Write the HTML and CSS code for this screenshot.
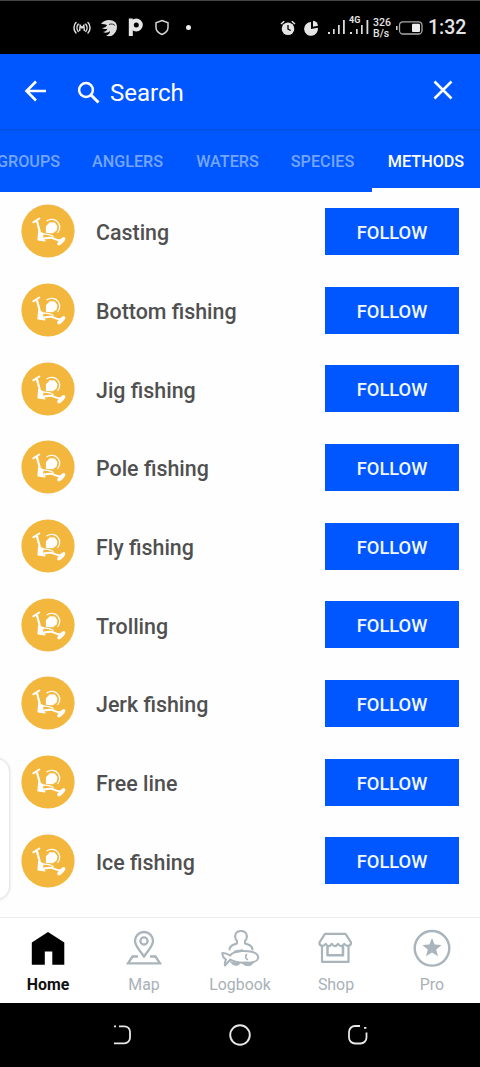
FILE: index.html
```html
<!DOCTYPE html>
<html lang="en">
<head>
<meta charset="utf-8">
<title>Search methods</title>
<link rel="stylesheet" href="styles.css">
</head>
<body>
<svg class="defs" width="0" height="0" aria-hidden="true">
  <symbol id="reel" viewBox="0 0 54 54">
    <circle cx="27" cy="27" r="26.6" fill="#f4b73e"/>
    <g fill="none" stroke="#fff" stroke-linecap="round" stroke-linejoin="round">
      <path d="M12.300 18.300l6-3.800" stroke-width="2"/>
      <path d="M16 17.500l2.600 9.500" stroke-width="2.200"/>
      <path d="M17.800 27.500l4 2.500-.5 4 2.500 2.800-6.600-1z" fill="#fff" stroke-width="1.500"/>
      <path d="M26 16.800c3.500-2.500 8.500-1.800 11 1.500 2.300 3.200 2.200 7-.2 10.200" stroke-width="1.200"/>
      <path d="M23.300 34.200c2.500.3 4-.6 6.500-.4 3 .2 4.500 2 8.800 2.400" stroke-width="2"/>
      <path d="M22.500 30c3 .2 6.500 0 9.500 2.300" stroke-width="1.300"/>
    </g>
    <path d="M25.500 22.500l3.500-3.700 4.500.2 2.300 3.300-.8 4-3.200 2.300-6.300-.3z" fill="#fff" stroke="#fff" stroke-linejoin="round" stroke-width="1.200"/>
    <ellipse cx="40.300" cy="37.300" rx="5.200" ry="2.200" transform="rotate(-46 40.300 37.300)" fill="#fff"/>
  </symbol>
</svg>
<div class="screen">
  <header class="status">
    <div class="status-left">
      <svg width="18" height="14" viewBox="0 0 18 14" fill="none" stroke="#ddd" stroke-width="1.500" stroke-linecap="round"><path d="M3 1.500C.3 4 .3 9.500 3 12M5.200 3.200c-1.600 2-1.600 5.200 0 7.200M15 1.500c2.700 2.500 2.700 8 0 10.500M12.800 3.200c1.600 2 1.600 5.200 0 7.200M6.700 9.500l.5-5L9 7l1.800-2.500.5 5"/></svg>
      <svg width="18" height="18" viewBox="0 0 18 18"><path d="M1 5C4 .5 11-.5 15 3c3.500 3.500 2 10-2 13-2 1.500-5 1.500-7 .5 3-1 4-2.500 4-4.500-2 2-5 2-7 1 3-.5 4-2 4.500-3.500C6 10.500 3.500 10 2 9c3 0 4.500-1.500 5-3-2-1-4-.5-6-1z" fill="#ddd"/><path d="M9 5.500c2.500-1 4.500-.5 6 1" fill="none" stroke="#000" stroke-width=".8"/></svg>
      <svg width="16" height="19" viewBox="0 0 16 19"><path d="M2.800 18V.5" stroke="#e6e6e6" stroke-width="4"/><circle cx="8.300" cy="7" r="4.500" fill="none" stroke="#e6e6e6" stroke-width="4"/></svg>
      <svg width="16" height="17" viewBox="0 0 16 17"><path d="M8 1.500l6 2.200v4.800c0 3-2.300 5.500-6 7-3.700-1.500-6-4-6-7V3.700z" fill="none" stroke="#d5d5d5" stroke-width="1.500"/></svg>
      <span class="status-dot"></span>
    </div>
    <div class="status-right">
      <svg class="alarm" width="16" height="16" viewBox="0 0 16 16"><circle cx="8" cy="8.800" r="6.300" fill="#e5e5e5"/><path d="M1 4l3.200-2.800M15 4l-3.200-2.800" stroke="#e5e5e5" stroke-width="1.500"/><path d="M8 5v4.200l2.700 1.300" fill="none" stroke="#000" stroke-width="1.300"/></svg>
      <svg class="pie" width="15" height="16" viewBox="0 0 15 16"><path d="M7 2v7l6.800-1.300A6.900 6.900 0 1 1 7 2z" fill="#e5e5e5"/><path d="M9 .8a6 6 0 0 1 5 5L9 6.800z" fill="#e5e5e5"/></svg>
      <svg class="bars" width="18" height="15" viewBox="0 0 18 15" fill="#ddd"><path d="M0 12h2v2H0zM5 9h1.700v5H5zM10 5h1.700v9H10zM15 0h1.800v14H15z"/></svg>
      <div class="mobile">
        <svg width="19" height="15" viewBox="0 0 19 15" fill="#ddd"><path d="M0 12h2v2H0zM6 9h1.700v5H6zM11 5h1.700v9H11zM16.500 0h1.800v14h-1.800z"/></svg>
        <span class="net">4G</span>
      </div>
      <div class="speed"><span>326</span><span>B/s</span></div>
      <svg class="battery" width="27" height="14" viewBox="0 0 27 14"><rect x="3.500" y=".8" width="22.500" height="12.200" rx="3.500" fill="none" stroke="#aaa" stroke-width="1.300"/><path d="M.8 5v4" stroke="#ddd" stroke-width="1.500"/><rect x="16" y="2.800" width="8" height="8.200" rx="1" fill="#eee"/></svg>
      <span class="clock">1:32</span>
    </div>
  </header>

  <div class="search-bar">
    <svg class="back" width="24" height="22" viewBox="0 0 24 22" fill="none" stroke="#fff" stroke-width="2.600"><path d="M22 11H3M12 1.500L2.500 11l9.500 9.500"/></svg>
    <svg class="glass" width="24" height="24" viewBox="0 0 24 24" fill="none" stroke="#fff"><circle cx="9" cy="9" r="6.900" stroke-width="2.500"/><path d="M14 14l7.500 7.500" stroke-width="3"/></svg>
    <span class="search-text">Search</span>
    <svg class="close" width="20" height="20" viewBox="0 0 20 20" stroke="#fff" stroke-width="2.500"><path d="M1.500 1.500l17 17M18.500 1.500l-17 17"/></svg>
  </div>

  <nav class="tabs">
    <span class="tab">GROUPS</span>
    <span class="tab">ANGLERS</span>
    <span class="tab">WATERS</span>
    <span class="tab">SPECIES</span>
    <span class="tab active">METHODS</span>
  </nav>

  <main class="list">
    <div class="row"><svg class="reel"><use href="#reel"/></svg><span class="name">Casting</span><button class="follow">FOLLOW</button></div>
    <div class="row"><svg class="reel"><use href="#reel"/></svg><span class="name">Bottom fishing</span><button class="follow">FOLLOW</button></div>
    <div class="row"><svg class="reel"><use href="#reel"/></svg><span class="name">Jig fishing</span><button class="follow">FOLLOW</button></div>
    <div class="row"><svg class="reel"><use href="#reel"/></svg><span class="name">Pole fishing</span><button class="follow">FOLLOW</button></div>
    <div class="row"><svg class="reel"><use href="#reel"/></svg><span class="name">Fly fishing</span><button class="follow">FOLLOW</button></div>
    <div class="row"><svg class="reel"><use href="#reel"/></svg><span class="name">Trolling</span><button class="follow">FOLLOW</button></div>
    <div class="row"><svg class="reel"><use href="#reel"/></svg><span class="name">Jerk fishing</span><button class="follow">FOLLOW</button></div>
    <div class="row"><svg class="reel"><use href="#reel"/></svg><span class="name">Free line</span><button class="follow">FOLLOW</button></div>
    <div class="row"><svg class="reel"><use href="#reel"/></svg><span class="name">Ice fishing</span><button class="follow">FOLLOW</button></div>
    <div class="edge-handle"></div>
  </main>

  <nav class="bottom">
    <div class="item current">
      <svg width="40" height="40" viewBox="0 0 40 40"><path d="M20 4l16.300 10.500v22.300H24.300V23.500h-7.500v13.300H3.800V14.500z" fill="#000"/></svg>
      <span>Home</span>
    </div>
    <div class="item">
      <svg width="40" height="40" viewBox="0 0 40 40" fill="none" stroke="#a9b4bb" stroke-width="2.300"><path d="M20 28.500c-4-6-9-10.500-9-15.500a9 9 0 0 1 18 0c0 5-5 9.500-9 15.500z"/><circle cx="20" cy="13" r="3.600"/><path d="M14 28.500H8.500L4 35.300h32L31.500 28.500H26"/></svg>
      <span>Map</span>
    </div>
    <div class="item">
      <svg width="40" height="40" viewBox="0 0 40 40" fill="none" stroke="#a9b4bb" stroke-width="2" stroke-linecap="round" stroke-linejoin="round"><path d="M9.500 21.500c.5-4 3.500-5 7.500-6v-2.500C13.500 9 15 3 21 3s7.500 6 4 10v2.500c4 1 7 2 7.500 6"/><path d="M10 27.500c3-3.500 9-4.500 13-4.500 8 0 15 2 15.300 6.500-.5 4-6 5.500-12 5-6 .5-11.500-.5-16-3L5 37.500c-.5-2 0-4 1-6C3.500 30 2.300 27.500 2.300 25c3 0 5.200.5 7.700 2.500z"/><path d="M26.500 26.500c-1.200 2-.8 4 .8 5" stroke-width="1.600"/><path d="M10.500 33.800c3 1 6 1.500 9.500 1.200-1.500 3.500-7.500 3-9.500-1.200zM22.500 35.300c4 .3 8-.3 11.500-1.800-1.500 5-8.500 5.500-11.500 1.800z" fill="#a9b4bb" stroke-width="1"/><path d="M15 23.800l7-1.200" stroke-width="2.500"/></svg>
      <span>Logbook</span>
    </div>
    <div class="item">
      <svg width="40" height="40" viewBox="0 0 40 40" fill="none" stroke="#a9b4bb" stroke-width="2.200" stroke-linejoin="round"><path d="M9 5.800h20.500l5.500 8.500c.3 3.500-4 5-6.700 1.500-2 3-4.500 3-6.300 0-2 3-4.500 3-6.300 0-2 3-4.500 3-6 0-2.500 3.500-6.700 2-6.200-1.500z"/><path d="M6 18v15.800h26.500V18"/><path d="M11.500 18v9.200h15.500V18" stroke-width="2.500"/></svg>
      <span>Shop</span>
    </div>
    <div class="item">
      <svg width="40" height="40" viewBox="0 0 40 40"><circle cx="20" cy="20.300" r="17.300" fill="none" stroke="#a9b4bb" stroke-width="2.400"/><path d="M20 10l2.600 6.500 7.100.4-5.500 4.500 1.800 6.900-6-3.900-6 3.900 1.800-6.900-5.500-4.500 7.100-.4z" fill="#a9b4bb"/></svg>
      <span>Pro</span>
    </div>
  </nav>

  <footer class="system">
    <svg width="20" height="22" viewBox="0 0 20 22" fill="none" stroke="#e8e8e8" stroke-width="1.800"><path d="M6 2.300h5.500a5.500 5.500 0 0 1 5.500 5.500v6a5.500 5.500 0 0 1-5.500 5.500H1M1 2.300h2"/></svg>
    <svg width="24" height="24" viewBox="0 0 24 24" fill="none" stroke="#e8e8e8" stroke-width="1.900"><circle cx="12" cy="12" r="9.800"/></svg>
    <svg width="22" height="22" viewBox="0 0 22 22" fill="none" stroke="#e8e8e8" stroke-width="1.800"><path d="M13 2H8a6 6 0 0 0-6 6v5.500a6 6 0 0 0 6 6h5.500a6 6 0 0 0 6-6V8.500M17 3.900h2.400"/></svg>
  </footer>
</div>
</body>
</html>
```
FILE: styles.css
```css
* { box-sizing: border-box; }
body { margin: 0; background: #fff; font-family: Roboto, "Liberation Sans", sans-serif; }
svg { display: block; flex: none; }
.defs { position: absolute; }
.screen { width: 480px; height: 1067px; display: flex; flex-direction: column; overflow: hidden; }

.status { height: 54px; flex: none; display: flex; justify-content: space-between; align-items: center; background: #000; color: #e4e4e4; border-top: 1px solid #444; padding: 0 15px 0 73px; }
.status-left { display: flex; align-items: center; gap: 10px; }
.status-left svg:nth-child(2) { margin-left: -1px; }
.status-dot { width: 5px; height: 5px; border-radius: 50%; background: #eee; margin-left: 6px; }
.status-right { display: flex; align-items: center; }
.pie { margin-left: 8px; }
.bars { margin: 0 0 0 9px; }
.mobile { position: relative; margin-left: 4px; }
.net { position: absolute; left: -1px; top: -4px; font-size: 9px; line-height: 9px; font-weight: 700; }
.speed { display: flex; flex-direction: column; width: 18px; margin-left: 4px; font-size: 10.500px; line-height: 11px; font-weight: 500; }
.speed span { height: 11px; overflow: hidden; }
.battery { margin-left: 5px; }
.clock { width: 37px; margin-left: 5px; font-size: 19.500px; line-height: 24px; font-weight: 500; }

.search-bar { height: 75px; flex: none; display: flex; align-items: center; background: #0057ff; color: #fff; padding: 0 27px 0 24px; }
.back { margin-top: -2px; }
.glass { margin: 3px 0 0 29px; }
.search-text { margin: 3px 0 0 9px; font-size: 24px; line-height: 30px; }
.close { margin: -3px 0 0 auto; }

.tabs { height: 63px; flex: none; display: flex; background: #0057ff; color: #74a5ff; border-top: 2px solid #0050ea; font-size: 16.200px; font-weight: 500; line-height: 61px; white-space: nowrap; }
.tab { flex: none; width: 96px; text-align: center; }
.tab:first-child { width: 76px; text-align: left; margin-left: -3px; }
.tab:nth-child(2) { width: 109px; }
.tab:nth-child(3) { width: 91px; }
.tab:nth-child(4) { width: 99px; }
.tab.active { width: 108px; color: #fff; border-bottom: 4px solid #fff; }

.list { position: relative; flex: 1; background: #fefefe; }
.row { height: 78.700px; display: flex; align-items: center; padding: 0 21px; }
.reel { width: 54px; height: 54px; }
.name { flex: 1; margin: 4px 0 0 21px; font-size: 21.400px; line-height: 28px; font-weight: 500; color: #505050; }
.follow { width: 134px; height: 47px; border: 0; padding: 2px 0 0; background: #0057ff; color: #f3f7ff; font: 500 18.300px Roboto, sans-serif; }
.edge-handle { position: absolute; left: -22px; top: 566px; width: 32px; height: 142px; background: #fff; border: 1px solid #e9e9e9; border-radius: 14px; box-shadow: 0 0 3px #ddd; }

.bottom { height: 86px; flex: none; display: grid; grid-template-columns: repeat(5, 96px); background: #fff; border-top: 1px solid #eee; }
.item { display: flex; flex-direction: column; align-items: center; padding-top: 10px; font-size: 15.900px; line-height: 20px; color: #a9b1b8; }
.item span { margin-top: 7px; }
.current { color: #111; font-weight: 700; }

.system { height: 64px; flex: none; display: flex; align-items: center; justify-content: space-between; padding: 0 111px 0 113px; background: #000; }
```
